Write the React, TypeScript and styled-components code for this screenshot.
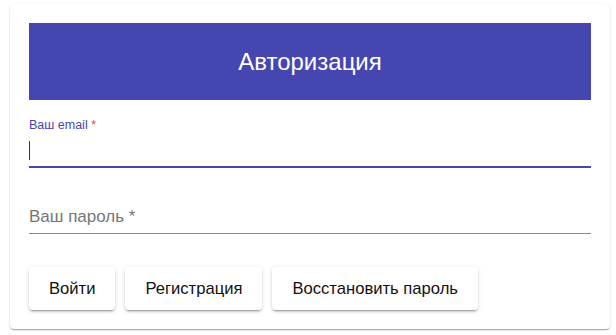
import * as React from 'react';
import styled, { createGlobalStyle } from 'styled-components';

const PRIMARY = '#4646b1';

const GlobalStyle = createGlobalStyle`
  body {
    margin: 0;
    background: #fff;
    font-family: 'Liberation Sans', Arial, sans-serif;
  }
`;

export default function App() {
  return (
    <>
      <GlobalStyle />
      <Page>
        <Card>
          <Header>Авторизация</Header>
          <Form>
            <Field>
              <Label>
                Ваш email <Star>*</Star>
              </Label>
              <InputRow $focused>
                <Caret />
              </InputRow>
            </Field>
            <Field>
              <InputRow>
                <Placeholder>Ваш пароль *</Placeholder>
              </InputRow>
            </Field>
          </Form>
          <Actions>
            <Button>Войти</Button>
            <Button>Регистрация</Button>
            <Button>Восстановить пароль</Button>
          </Actions>
        </Card>
      </Page>
    </>
  );
}

const Page = styled.div`
  padding: 4px 6px 8px 10px;
`;

const Card = styled.div`
  width: 600px;
  box-sizing: border-box;
  padding: 19px 19px 19px 19px;
  background: #fff;
  border-radius: 4px;
  box-shadow: 0 2px 1px -1px rgba(0, 0, 0, 0.2), 0 1px 1px 0 rgba(0, 0, 0, 0.14),
    0 1px 3px 0 rgba(0, 0, 0, 0.12);
`;

const Header = styled.div`
  height: 77px;
  background: ${PRIMARY};
  color: #fff;
  font-size: 24px;
  display: flex;
  align-items: center;
  justify-content: center;
`;

const Form = styled.div`
  display: flex;
  flex-direction: column;
  gap: 18px;
  padding-top: 18px;
`;

const Field = styled.div`
  display: flex;
  flex-direction: column;
  justify-content: flex-end;
  min-height: 48px;
`;

const Label = styled.div`
  font-size: 12.5px;
  color: ${PRIMARY};
  line-height: 14px;
`;

const Star = styled.span`
  color: #f44336;
`;

const InputRow = styled.div<{ $focused?: boolean }>`
  height: ${(p) => (p.$focused ? '34px' : '32px')};
  display: flex;
  align-items: center;
  border-bottom: ${(p) => (p.$focused ? `2px solid ${PRIMARY}` : '1px solid #8a8a8a')};
  margin-top: ${(p) => (p.$focused ? '0' : '1px')};
`;

const Caret = styled.span`
  display: block;
  width: 1px;
  height: 19px;
  background: #333;
  margin-top: 2px;
`;

const Placeholder = styled.span`
  font-size: 17px;
  color: #757575;
`;

const Actions = styled.div`
  display: flex;
  gap: 10px;
  margin-top: 33px;
`;

const Button = styled.button`
  height: 43px;
  padding: 0 20px;
  border: none;
  border-radius: 4px;
  background: #fff;
  color: #111;
  font-family: 'Liberation Sans', Arial, sans-serif;
  font-size: 16.6px;
  cursor: pointer;
  box-shadow: 0 3px 1px -2px rgba(0, 0, 0, 0.2), 0 2px 2px 0 rgba(0, 0, 0, 0.14),
    0 1px 5px 0 rgba(0, 0, 0, 0.12);
`;
